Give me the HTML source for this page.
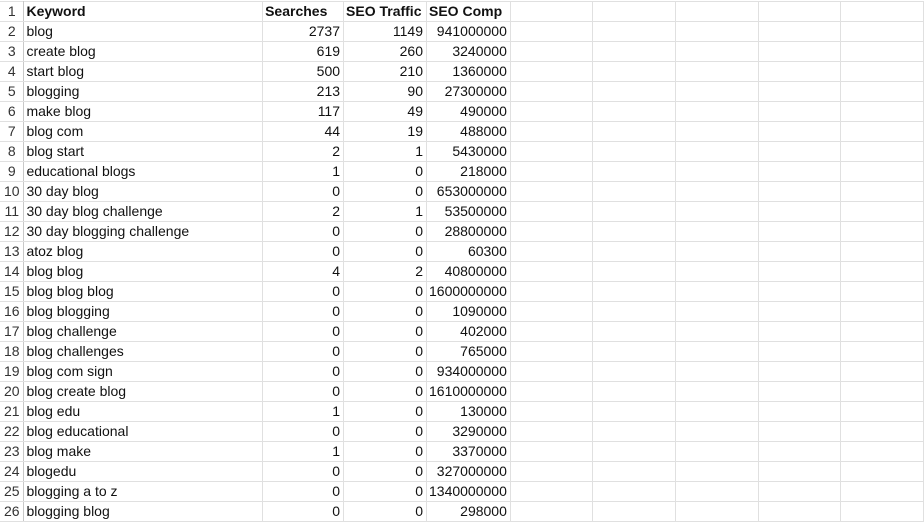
<!DOCTYPE html>
<html><head><style>
html,body{margin:0;padding:0;background:#fff;width:924px;height:521px;overflow:hidden}
table{position:absolute;left:0;top:1px;border-collapse:collapse;table-layout:fixed;font-family:"Liberation Sans",Arial,sans-serif;font-size:14px;color:#111}
td{height:19px;padding:0 2px;border-right:1px solid #e0e0e0;border-bottom:1px solid #e0e0e0;white-space:nowrap;overflow:hidden;line-height:19px}
td.n{text-align:right;padding-right:3px}
td.h{text-align:center;border-right:1px solid #c8c8c8;color:#333;padding:0}
tr:first-child td{border-top:1px solid #e0e0e0}
tr:first-child td.b{font-weight:bold}
</style></head><body>
<table>
<colgroup><col style="width:24px"><col style="width:239px"><col style="width:81px"><col style="width:83px"><col style="width:83px"><col style="width:83px"><col style="width:83px"><col style="width:83px"><col style="width:83px"><col style="width:83px"></colgroup>
<tr><td class="h">1</td><td class="b">Keyword</td><td class="b">Searches</td><td class="b">SEO Traffic</td><td class="b">SEO Comp</td><td></td><td></td><td></td><td></td><td></td></tr>
<tr><td class="h">2</td><td>blog</td><td class="n">2737</td><td class="n">1149</td><td class="n">941000000</td><td></td><td></td><td></td><td></td><td></td></tr>
<tr><td class="h">3</td><td>create blog</td><td class="n">619</td><td class="n">260</td><td class="n">3240000</td><td></td><td></td><td></td><td></td><td></td></tr>
<tr><td class="h">4</td><td>start blog</td><td class="n">500</td><td class="n">210</td><td class="n">1360000</td><td></td><td></td><td></td><td></td><td></td></tr>
<tr><td class="h">5</td><td>blogging</td><td class="n">213</td><td class="n">90</td><td class="n">27300000</td><td></td><td></td><td></td><td></td><td></td></tr>
<tr><td class="h">6</td><td>make blog</td><td class="n">117</td><td class="n">49</td><td class="n">490000</td><td></td><td></td><td></td><td></td><td></td></tr>
<tr><td class="h">7</td><td>blog com</td><td class="n">44</td><td class="n">19</td><td class="n">488000</td><td></td><td></td><td></td><td></td><td></td></tr>
<tr><td class="h">8</td><td>blog start</td><td class="n">2</td><td class="n">1</td><td class="n">5430000</td><td></td><td></td><td></td><td></td><td></td></tr>
<tr><td class="h">9</td><td>educational blogs</td><td class="n">1</td><td class="n">0</td><td class="n">218000</td><td></td><td></td><td></td><td></td><td></td></tr>
<tr><td class="h">10</td><td>30 day blog</td><td class="n">0</td><td class="n">0</td><td class="n">653000000</td><td></td><td></td><td></td><td></td><td></td></tr>
<tr><td class="h">11</td><td>30 day blog challenge</td><td class="n">2</td><td class="n">1</td><td class="n">53500000</td><td></td><td></td><td></td><td></td><td></td></tr>
<tr><td class="h">12</td><td>30 day blogging challenge</td><td class="n">0</td><td class="n">0</td><td class="n">28800000</td><td></td><td></td><td></td><td></td><td></td></tr>
<tr><td class="h">13</td><td>atoz blog</td><td class="n">0</td><td class="n">0</td><td class="n">60300</td><td></td><td></td><td></td><td></td><td></td></tr>
<tr><td class="h">14</td><td>blog blog</td><td class="n">4</td><td class="n">2</td><td class="n">40800000</td><td></td><td></td><td></td><td></td><td></td></tr>
<tr><td class="h">15</td><td>blog blog blog</td><td class="n">0</td><td class="n">0</td><td class="n">1600000000</td><td></td><td></td><td></td><td></td><td></td></tr>
<tr><td class="h">16</td><td>blog blogging</td><td class="n">0</td><td class="n">0</td><td class="n">1090000</td><td></td><td></td><td></td><td></td><td></td></tr>
<tr><td class="h">17</td><td>blog challenge</td><td class="n">0</td><td class="n">0</td><td class="n">402000</td><td></td><td></td><td></td><td></td><td></td></tr>
<tr><td class="h">18</td><td>blog challenges</td><td class="n">0</td><td class="n">0</td><td class="n">765000</td><td></td><td></td><td></td><td></td><td></td></tr>
<tr><td class="h">19</td><td>blog com sign</td><td class="n">0</td><td class="n">0</td><td class="n">934000000</td><td></td><td></td><td></td><td></td><td></td></tr>
<tr><td class="h">20</td><td>blog create blog</td><td class="n">0</td><td class="n">0</td><td class="n">1610000000</td><td></td><td></td><td></td><td></td><td></td></tr>
<tr><td class="h">21</td><td>blog edu</td><td class="n">1</td><td class="n">0</td><td class="n">130000</td><td></td><td></td><td></td><td></td><td></td></tr>
<tr><td class="h">22</td><td>blog educational</td><td class="n">0</td><td class="n">0</td><td class="n">3290000</td><td></td><td></td><td></td><td></td><td></td></tr>
<tr><td class="h">23</td><td>blog make</td><td class="n">1</td><td class="n">0</td><td class="n">3370000</td><td></td><td></td><td></td><td></td><td></td></tr>
<tr><td class="h">24</td><td>blogedu</td><td class="n">0</td><td class="n">0</td><td class="n">327000000</td><td></td><td></td><td></td><td></td><td></td></tr>
<tr><td class="h">25</td><td>blogging a to z</td><td class="n">0</td><td class="n">0</td><td class="n">1340000000</td><td></td><td></td><td></td><td></td><td></td></tr>
<tr><td class="h">26</td><td>blogging blog</td><td class="n">0</td><td class="n">0</td><td class="n">298000</td><td></td><td></td><td></td><td></td><td></td></tr>
</table>
</body></html>
